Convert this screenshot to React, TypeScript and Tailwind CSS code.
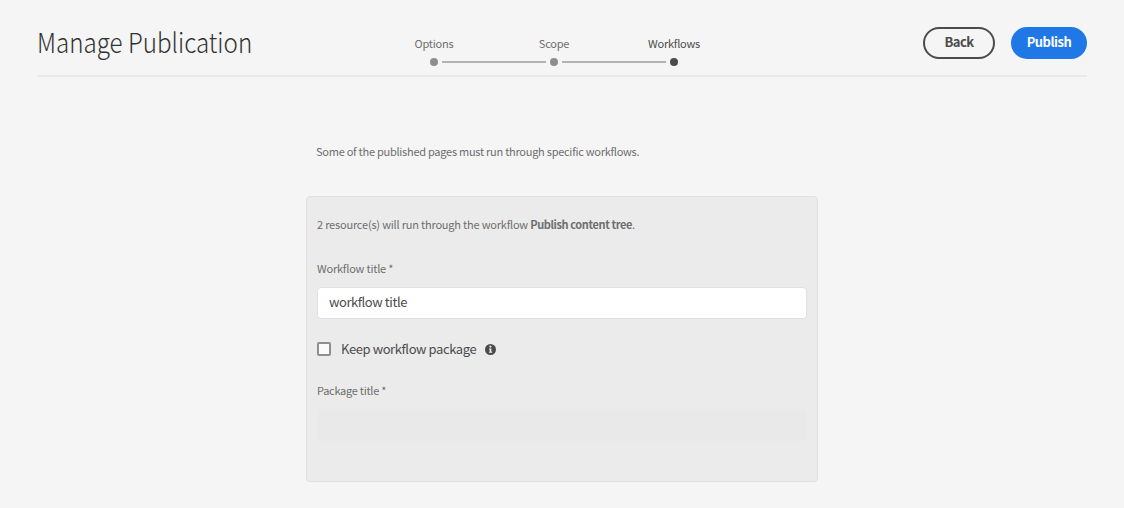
const steps = [
  { label: 'Options', active: false },
  { label: 'Scope', active: false },
  { label: 'Workflows', active: true },
];

function StepList() {
  return (
    <ol className="flex pt-[35px] text-[11px] leading-[16px] tracking-[-0.22px]">
      {steps.map((step, i) => (
        <li key={step.label} className="flex w-[120px] flex-col">
          <span
            className={
              step.active
                ? 'flex justify-center whitespace-nowrap text-[#4b4b4b]'
                : 'flex justify-center whitespace-nowrap text-[#6e6e6e]'
            }
          >
            {step.label}
          </span>
          <span className="mt-[7px] flex h-2 items-center">
            <span className={i === 0 ? 'h-[2px] w-[52px]' : 'h-[2px] w-[52px] bg-[#b3b3b3]'} />
            <span
              className={
                step.active
                  ? 'mx-1 size-2 shrink-0 rounded-full bg-[#4b4b4b]'
                  : 'mx-1 size-2 shrink-0 rounded-full bg-[#8e8e8e]'
              }
            />
            <span
              className={i === steps.length - 1 ? 'h-[2px] w-[52px]' : 'h-[2px] w-[52px] bg-[#b3b3b3]'}
            />
          </span>
        </li>
      ))}
    </ol>
  );
}

function InfoIcon() {
  return (
    <svg className="ml-[9px] size-[11px]" viewBox="0 0 11 11" aria-hidden="true">
      <circle cx="5.5" cy="5.5" r="5.5" fill="#4b4b4b" />
      <circle cx="5.4" cy="2.6" r="1.1" fill="#ebebeb" />
      <path d="M4 4.4h2.4v3.3h.8v1.1H3.9V7.7h.8V5.5H4z" fill="#ebebeb" />
    </svg>
  );
}

export default function App() {
  return (
    <div className="flex h-[508px] w-[1124px] flex-col bg-[#f5f5f5] font-['Noto_Sans_CJK_SC',sans-serif] text-[#6e6e6e]">
      <header className="mx-[37px] flex h-[77px] border-b-2 border-[#eaeaea]">
        <h1 className="w-[337px] whitespace-nowrap pt-[22px] text-[27px] leading-[40px] font-light text-[#323232]">
          <span className="inline-block origin-left scale-x-[0.895]">Manage Publication</span>
        </h1>
        <StepList />
        <div className="ml-auto flex gap-4 pt-[27px] text-[13px] leading-[26px] font-bold tracking-[-0.5px]">
          <button className="flex h-8 w-[72px] justify-center rounded-full border-2 border-[#4b4b4b] text-[#4b4b4b]">
            <span>Back</span>
          </button>
          <button className="flex h-8 w-[76px] justify-center rounded-full bg-[#1f78e6] pt-[2px] text-white">
            <span>Publish</span>
          </button>
        </div>
      </header>
      <main className="mx-auto w-[512px] text-[11px] leading-[16px] tracking-[-0.2px]">
        <p className="mt-[66px] pl-[10px] tracking-[-0.26px] whitespace-nowrap">
          Some of the published pages must run through specific workflows.
        </p>
        <section className="mt-[37px] h-[286px] rounded-[4px] border border-[#e0e0e0] bg-[#ebebeb] px-[10px] pt-[19px]">
          <p className="whitespace-nowrap">
            2 resource(s) will run through the workflow{' '}
            <strong className="font-bold tracking-[-0.4px]">Publish content tree</strong>.
          </p>
          <div className="mt-[28px]">Workflow title *</div>
          <input
            className="mt-[11px] block h-8 w-full rounded-[4px] border border-[#e0e0e0] bg-white px-[11px] pb-[3px] text-[13px] tracking-[-0.42px] text-[#4b4b4b] outline-none"
            defaultValue="workflow title"
          />
          <div className="mt-[20px] flex h-5 items-center text-[13px] tracking-[-0.4px] text-[#4b4b4b]">
            <span className="size-[14px] rounded-[2px] border-2 border-[#8e8e8e] bg-[#fafafa]" />
            <span className="ml-[10px] whitespace-nowrap">Keep workflow package</span>
            <InfoIcon />
          </div>
          <div className="mt-[23px] tracking-[-0.27px]">Package title *</div>
          <div className="mt-[11px] h-8 rounded-[4px] bg-[#e9e9e9]" />
        </section>
      </main>
    </div>
  );
}
